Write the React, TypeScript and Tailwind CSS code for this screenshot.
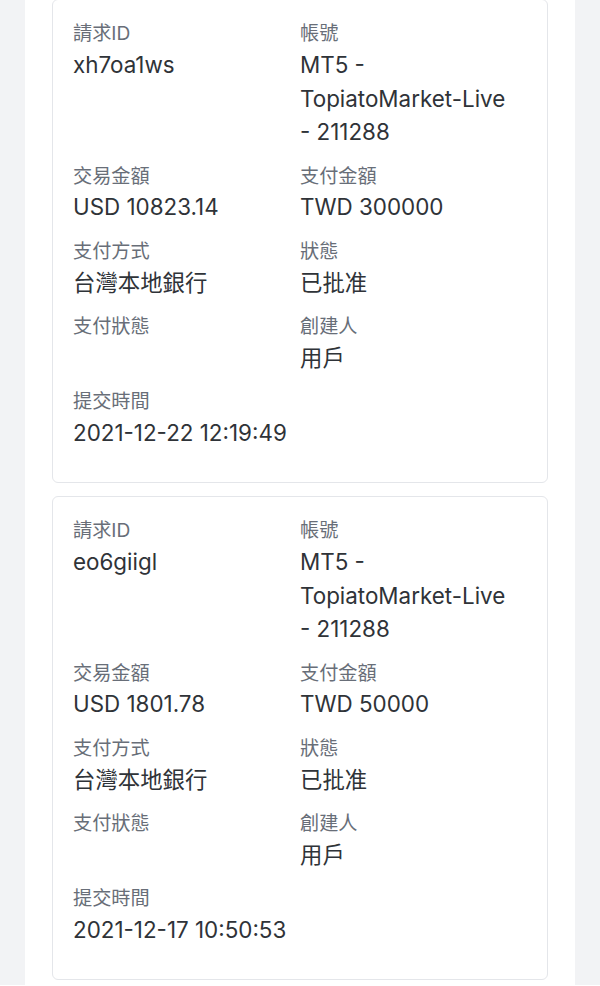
const records = [
  {
    id: "xh7oa1ws",
    account: ["MT5 -", "TopiatoMarket-Live", "- 211288"],
    txAmount: "USD 10823.14",
    payAmount: "TWD 300000",
    method: "台灣本地銀行",
    status: "已批准",
    payStatus: "",
    creator: "用戶",
    submitted: "2021-12-22 12:19:49",
  },
  {
    id: "eo6giigl",
    account: ["MT5 -", "TopiatoMarket-Live", "- 211288"],
    txAmount: "USD 1801.78",
    payAmount: "TWD 50000",
    method: "台灣本地銀行",
    status: "已批准",
    payStatus: "",
    creator: "用戶",
    submitted: "2021-12-17 10:50:53",
  },
];

function Field({ label, children }: { label: string; children?: React.ReactNode }) {
  return (
    <div className="mb-[12.8px] min-w-0">
      <p className="text-[19.2px] leading-[28.8px] text-[#686e78]">{label}</p>
      <div className="text-[22.4px] leading-[33.6px] text-[#2f3338]">{children}</div>
    </div>
  );
}

function RecordCard({ item }: any) {
  return (
    <div className="rounded-[6px] border border-[#e4e6ea] bg-white px-[20px] pt-[19.2px] pb-[20px]">
      <div className="grid grid-cols-2">
        <Field label="請求ID">{item.id}</Field>
        <Field label="帳號">
          {item.account.map((part: string, i: number) => (
            <span key={i}>
              {i > 0 && " "}
              <span className="whitespace-nowrap">{part}</span>
            </span>
          ))}
        </Field>
        <Field label="交易金額">{item.txAmount}</Field>
        <Field label="支付金額">{item.payAmount}</Field>
        <Field label="支付方式">{item.method}</Field>
        <Field label="狀態">{item.status}</Field>
        <Field label="支付狀態">{item.payStatus}</Field>
        <Field label="創建人">{item.creator}</Field>
        <Field label="提交時間">{item.submitted}</Field>
      </div>
    </div>
  );
}

export default function App() {
  return (
    <div
      className="min-h-[986px] bg-[#f2f3f5] px-[25px]"
      style={{ fontFamily: 'Inter, "Noto Sans CJK TC", sans-serif' }}
    >
      <div className="min-h-[986px] bg-white px-[27px]">
        <div className="-mt-px flex flex-col gap-[12.8px]">
          {records.map((r) => (
            <RecordCard key={r.id} item={r} />
          ))}
        </div>
      </div>
    </div>
  );
}
